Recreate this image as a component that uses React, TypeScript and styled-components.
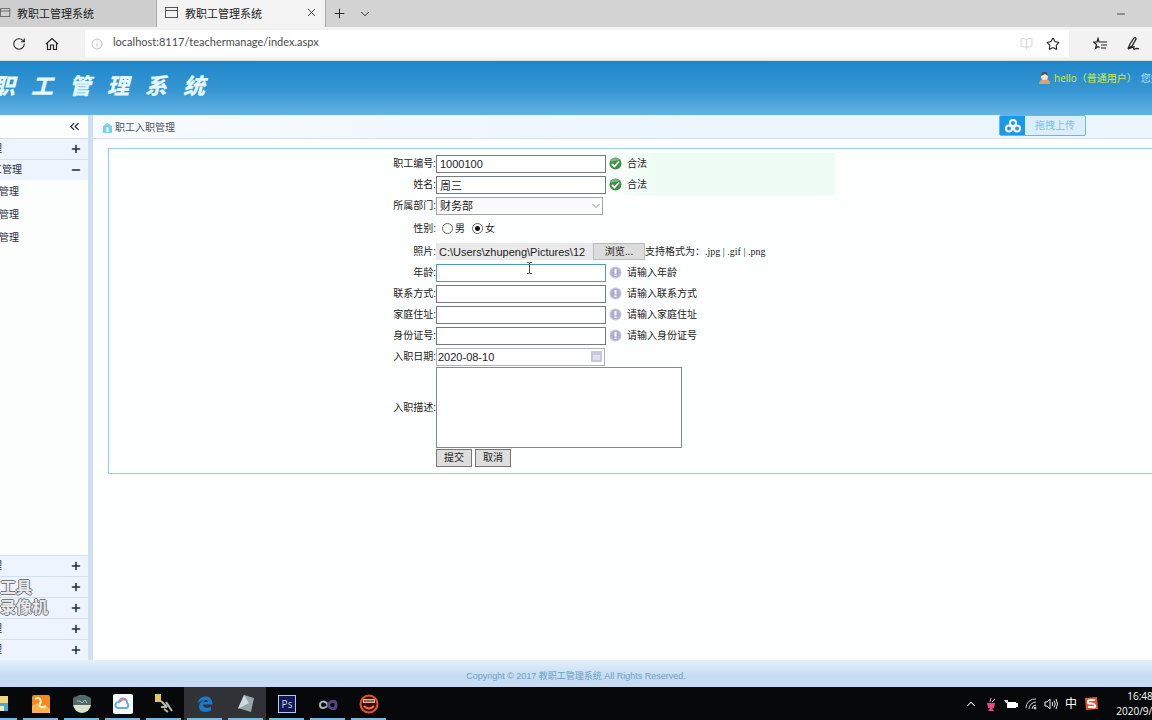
import React from 'react';
import styled, { createGlobalStyle, css } from 'styled-components';
import { BookOpen, ChevronDown, ChevronUp, ChevronsLeft, Info, Minus, Plus, RotateCw, Star, X } from 'lucide-react';

const GlobalStyle = createGlobalStyle`
  * { box-sizing: border-box; }
  body {
    margin: 0;
    font: 10px/14px "Liberation Sans", "Noto Sans CJK SC", sans-serif;
    color: #222;
    background: #fdfffe;
  }
  button, input, select, textarea { font: inherit; color: inherit; margin: 0; }
`;

const Screen = styled.div`
  display: flex;
  flex-direction: column;
  min-height: 100vh;
  overflow: hidden;
`;

const IconButton = styled.button`
  display: flex;
  align-items: center;
  justify-content: center;
  flex: none;
  width: 20px;
  height: 20px;
  padding: 0;
  border: 0;
  background: none;
`;

/* Browser chrome */

const TabStrip = styled.div`
  display: flex;
  height: 27px;
  background: #d3d3d3;
  font: 11px/16px "Noto Sans CJK SC", sans-serif;
  color: #1b1b1b;
`;

const Tab = styled.div<{ $active?: boolean; $width: number }>`
  display: flex;
  align-items: center;
  gap: 6px;
  width: ${(p) => p.$width}px;
  padding: 0 4px 2px ${(p) => (p.$active ? 8 : 0)}px;
  background: ${(p) => (p.$active ? '#f3f3f3' : '#cfcfcf')};
  border-right: 1px solid #a9a9a9;
  overflow: hidden;
  white-space: nowrap;
  & > svg { flex: none; }
`;

const TabLabel = styled.span`
  flex: 1;
`;

const StripActions = styled.div`
  display: flex;
  align-items: center;
  flex: 1;
  padding: 0 21px 0 3px;
  gap: 6px;
`;

const Spacer = styled.div`
  flex: 1;
`;

const AddressBar = styled.div`
  display: flex;
  align-items: center;
  height: 34px;
  padding-left: 9px;
  background: #f2f2f2;
  border-bottom: 1px solid #d9dfe5;
`;

const NavButtons = styled.div`
  display: flex;
  gap: 13px;
  width: 76px;
`;

const AddressField = styled.label`
  display: flex;
  align-items: center;
  flex: 1;
  gap: 10px;
  height: 27px;
  padding: 0 6px;
  background: #fff;
  color: #aaa;
`;

const AddressInput = styled.input`
  flex: 1;
  min-width: 0;
  padding: 0 0 3px;
  border: 0;
  outline: 0;
  background: none;
  color: #4b4b4b;
  font: 11px/16px Lato, sans-serif;
`;

const ToolButtons = styled.div`
  display: flex;
  gap: 13px;
  padding: 0 9px 0 21px;
`;

/* Application */

const Header = styled.header`
  display: flex;
  justify-content: space-between;
  height: 54px;
  background: linear-gradient(#1e87c9, #3796d3 55%, #62b3e2);
  overflow: hidden;
`;

const Title = styled.h1`
  display: flex;
  align-items: center;
  gap: 16px;
  margin: 0 0 2px -7px;
  color: #e4f8ff;
  font: italic 900 22px/30px "Liberation Serif", "Noto Sans CJK SC", serif;
`;

const UserInfo = styled.div`
  display: flex;
  gap: 4px;
  width: 113px;
  padding-top: 9px;
  color: #d8ec3a;
  font: 10px/16px "Open Sans", "Noto Sans CJK SC", sans-serif;
  white-space: nowrap;
  overflow: hidden;
  & > svg { flex: none; margin-top: 2px; }
`;

const Greeting = styled.span`
  color: #b5e2ff;
`;

const Body = styled.div`
  display: flex;
  flex: 1;
`;

const Sidebar = styled.nav`
  position: relative;
  display: flex;
  flex-direction: column;
  flex: none;
  width: 93px;
  border-right: 5px solid #cfdff0;
  background: #fcfefe;
`;

const SideRow = styled.button<{ $plain?: boolean }>`
  display: flex;
  align-items: center;
  justify-content: space-between;
  height: ${(p) => (p.$plain ? 23 : 21)}px;
  padding: 0 6px 0 0;
  border: 0;
  border-top: ${(p) => (p.$plain ? '0' : '1px solid #d3dfee')};
  background: ${(p) => (p.$plain ? 'none' : '#edf4fd')};
  color: #1d2a3c;
`;

const SideText = styled.span<{ $width: number }>`
  display: flex;
  justify-content: flex-end;
  width: ${(p) => p.$width}px;
  overflow: hidden;
  white-space: nowrap;
`;

const Watermark = styled.div`
  position: absolute;
  left: 0;
  bottom: 44px;
  color: #e6eaf0;
  font: bold 16px/20px "Noto Sans CJK SC", sans-serif;
  white-space: nowrap;
  text-shadow: 1px 0 #777, -1px 0 #777, 0 1px #777, 0 -1px #777;
`;

const Content = styled.main`
  flex: 1;
  min-width: 0;
`;

const Crumbs = styled.div`
  display: flex;
  justify-content: space-between;
  height: 24px;
  padding: 0 66px 0 10px;
  border-bottom: 1px solid #d5e1ea;
  background: linear-gradient(90deg, #f8fbfe, #eaf5fc 60%);
`;

const Crumb = styled.h2`
  display: flex;
  align-items: center;
  gap: 3px;
  margin: 2px 0 0;
  font-size: 10px;
  font-weight: normal;
  color: #4a5360;
`;

const UploadButton = styled.button`
  display: flex;
  align-items: center;
  width: 87px;
  height: 21px;
  padding: 0;
  border: 1px solid #69b7ee;
  border-radius: 2px;
  background: #d9effd;
  color: #7dbdea;
`;

const UploadIcon = styled.span`
  display: flex;
  align-items: center;
  justify-content: center;
  width: 25px;
  height: 19px;
  background: #1899ea;
`;

const UploadText = styled.span`
  flex: 1;
`;

const Panel = styled.form`
  margin: 9px 0 0 15px;
  padding: 4px 0 6px;
  border: 1px solid #93cfe0;
  border-right: 0;
`;

const Row = styled.div<{ $height?: number }>`
  display: flex;
  align-items: center;
  height: ${(p) => p.$height ?? 21}px;
`;

const labelStyle = css`
  flex: none;
  width: 327px;
  text-align: right;
  white-space: nowrap;
`;

const FieldLabel = styled.label`${labelStyle}`;
const GroupLabel = styled.span`${labelStyle}`;

const TextField = styled.input<{ $focus?: boolean }>`
  width: 170px;
  height: 18px;
  padding: 0 3px;
  border: 1px solid ${(p) => (p.$focus ? '#4b9cc4' : '#747a7e')};
  border-radius: 0;
  outline: 0;
  background: #fff;
  font-size: 11px;
`;

const DeptSelect = styled.span`
  position: relative;
  width: 167px;
  height: 18px;
  & > select {
    appearance: none;
    width: 100%;
    height: 18px;
    padding: 0 3px;
    border: 1px solid #a0a4a6;
    border-radius: 0;
    background: #fbfbfb;
    font-size: 11px;
  }
  & > svg { position: absolute; right: 1px; top: 3px; pointer-events: none; }
`;

const Choice = styled.label`
  display: flex;
  align-items: center;
  gap: 2px;
  padding: 0 1px 0 6px;
`;

const Radio = styled.input`
  appearance: none;
  width: 11px;
  height: 11px;
  border: 1px solid #666;
  border-radius: 50%;
  background: #fff;
  &:checked { background: radial-gradient(circle, #111 0 2px, #fff 3px); }
`;

const FilePath = styled.input`
  width: 157px;
  height: 17px;
  padding: 0 3px;
  border: 0;
  background: #e9e9e9;
  font-size: 11px;
`;

const BrowseButton = styled.button`
  width: 52px;
  height: 17px;
  padding: 0;
  border: 1px solid #bcbcbc;
  background: #dcdcdc;
`;

const Formats = styled.span`
  font-family: "Liberation Serif", "Noto Sans CJK SC", serif;
  white-space: pre;
`;

const Status = styled.span<{ $ok?: boolean }>`
  display: flex;
  align-items: center;
  gap: 5px;
  width: 229px;
  height: 21px;
  padding-left: 3px;
  background: ${(p) => (p.$ok ? 'linear-gradient(90deg, #fdfffe, #effcf4 20%)' : 'none')};
`;

const DateField = styled.span`
  display: flex;
  align-items: center;
  width: 169px;
  height: 18px;
  padding-right: 2px;
  border: 1px solid #b0b4b6;
  background: #fff;
  & > input {
    flex: 1;
    min-width: 0;
    padding: 0 1px;
    border: 0;
    background: none;
    font-size: 11px;
  }
`;

const Description = styled.textarea`
  display: block;
  width: 246px;
  height: 81px;
  border: 1px solid #85898b;
  border-radius: 0;
  background: #fff;
  resize: none;
`;

const Actions = styled.div`
  display: flex;
  gap: 3px;
  padding: 1px 0 0 327px;
`;

const ActionButton = styled.button`
  width: 36px;
  height: 18px;
  padding: 0;
  border: 1px solid #777;
  background: #dedede;
`;

const Cursor = styled.svg`
  position: absolute;
  left: 90px;
  top: -2px;
  pointer-events: none;
`;

const CursorAnchor = styled.span`
  position: relative;
  display: flex;
`;

const Footer = styled.footer`
  height: 27px;
  padding-top: 9px;
  background: linear-gradient(#e4effa, #c6dcf4 60%);
  color: #6ea0c4;
  font-size: 9px;
  text-align: center;
`;

/* Desktop taskbar */

const Taskbar = styled.div`
  display: flex;
  justify-content: space-between;
  height: 33px;
  background: #060809;
  color: #fff;
  overflow: hidden;
`;

const Apps = styled.div`
  display: flex;
  margin-left: -21px;
`;

const AppButton = styled.button<{ $active?: boolean }>`
  display: flex;
  align-items: center;
  justify-content: center;
  width: 41px;
  padding: 0;
  border: 0;
  border-left: 3px solid ${(p) => (p.$active ? '#303236' : 'transparent')};
  border-right: 3px solid ${(p) => (p.$active ? '#303236' : 'transparent')};
  background: ${(p) => (p.$active ? '#303236' : 'none')};
  background-clip: padding-box;
  box-shadow: inset 0 -2px #7fb6de;
`;

const Tray = styled.div`
  display: flex;
  align-items: center;
  font-size: 12px;
`;

const TrayItem = styled.span`
  display: flex;
  justify-content: center;
  width: 20px;
`;

const Clock = styled.div`
  display: flex;
  flex-direction: column;
  align-items: flex-start;
  width: 36px;
  margin-left: 15px;
  font: 10px/15px "Open Sans", sans-serif;
  white-space: nowrap;
  overflow: hidden;
`;

const ClockText = styled.time`
  flex: none;
  width: 48px;
  text-align: center;
`;

const PageIcon = () => (
  <svg width="14" height="12" viewBox="0 0 14 12" fill="none" stroke="#555">
    <rect x=".5" y=".5" width="12" height="10" />
    <path d="M.5 3.5h12" />
  </svg>
);

const OkIcon = () => (
  <svg width="13" height="13" viewBox="0 0 13 13">
    <circle cx="6.5" cy="6.5" r="6" fill="#3c8f45" />
    <path d="M1.5 5a5 5 0 0 1 9-2z" fill="#79b97e" />
    <path d="M3 7l2.500 2.500L10 4.500" fill="none" stroke="#fff" strokeWidth="1.800" />
  </svg>
);

const HintIcon = () => (
  <svg width="13" height="13" viewBox="0 0 13 13">
    <circle cx="6.500" cy="6.500" r="6" fill="#c3c1dc" />
    <circle cx="6.500" cy="6.500" r="4.500" fill="#aeacce" />
    <path d="M6.500 3v4.500M6.500 8.500v1.500" stroke="#fff" strokeWidth="2" />
  </svg>
);

const appIcons: { name: string; active?: boolean; art: React.ReactNode }[] = [
  { name: '资源管理器', art: <><path d="M1 2h17v15H1z" fill="#f4d778" /><path d="M1 9h17v8H1z" fill="#48a8dd" /><path d="M6 12h8v5H6z" fill="#f6e7ad" /></> },
  { name: '图片工具', art: <><rect x="1" y="1" width="18" height="18" rx="2" fill="#f28a1c" /><path d="M1 12l6-3 3 4 5-1 4 3v4H1z" fill="#f9b54b" /><path d="M4 5c5-3 7 2 5 5s2 4 6 2" fill="none" stroke="#fff0d0" strokeWidth="2" /></> },
  { name: '虚拟机', art: <><circle cx="10" cy="10" r="9" fill="#dbe3cd" /><path d="M1 4q9-6 18 0v7H1z" fill="#52686b" /><path d="M5 7h3l2 2 3-3 2 3" fill="none" stroke="#aebfbd" /></> },
  { name: '百度网盘', art: <><rect x="0" y="0" width="20" height="20" rx="2" fill="#f6f8fa" /><path d="M5 14a3 3 0 0 1 1-6 4 4 0 0 1 8 1 3 3 0 0 1 0 5z" fill="none" stroke="#66aee1" strokeWidth="2" /><path d="M7 8a4 4 0 0 1 6-2" stroke="#e27a90" strokeWidth="2" fill="none" /></> },
  { name: '数据库工具', art: <><path d="M1 0h6v8H1z" fill="#dfc66c" /><path d="M7 7l6 6m-6 0h6m-1-5l6 9m-8-2l4 3" stroke="#b8b8b0" strokeWidth="2" /></> },
  { name: 'Edge', active: true, art: <path d="M2.500 9C4 3 9 2 12 2.500c4 1 5.500 4 5.500 8H8c0 4 5 4 8 2v4c-5 2.500-12 2-12-4 0-3 2-5 5-6-2 0-4 1-6.500 2.500zM8.500 8H13c0-3-4-2.500-4.500 0z" fill="#1879cf" /> },
  { name: '记事本', active: true, art: <><path d="M8 1l10 3-3 14-13-4z" fill="#93a7ab" /><path d="M8 1l5 8-11 6z" fill="#ccd8d9" /></> },
  { name: 'Photoshop', art: <><rect x="1.500" y="1.500" width="17" height="17" fill="#14194f" stroke="#b8c4f3" /><text x="10" y="14" textAnchor="middle" fontSize="10" fontFamily="Open Sans" fill="#c6d2ff">Ps</text></> },
  { name: 'Visual Studio', art: <><path d="M10 11c-3-5-8-4-8 0s5 4 8 0" fill="none" stroke="#a9b5c0" strokeWidth="2" /><path d="M10 11c3-5 8-5 8 0s-5 5-8 0" fill="none" stroke="#51457e" strokeWidth="3" /></> },
  { name: '录像机', art: <><circle cx="10" cy="10" r="8.500" fill="#301009" stroke="#e6532a" strokeWidth="2" /><path d="M4 5h12v4H4z" fill="#f0b48e" /><path d="M5 7h10" stroke="#301009" /><path d="M5 12q5 5 10 0" stroke="#ef7040" strokeWidth="2" fill="none" /></> },
];

const hintRows = [
  { id: 'age', label: '年龄:', hint: '请输入年龄', focus: true },
  { id: 'phone', label: '联系方式:', hint: '请输入联系方式' },
  { id: 'address', label: '家庭住址:', hint: '请输入家庭住址' },
  { id: 'idcard', label: '身份证号:', hint: '请输入身份证号' },
];

/* The watermark covers the names of the second and third groups. */
const sideGroups = [
  { name: '部门管理', text: true },
  { name: '考勤管理', text: false },
  { name: '工资管理', text: false },
  { name: '奖惩管理', text: true },
  { name: '用户管理', text: true },
];

export default function App() {
  return (
    <Screen>
      <GlobalStyle />
      <TabStrip>
        <Tab $width={157}>
          <SideText $width={11}><PageIcon /></SideText>
          <TabLabel>教职工管理系统</TabLabel>
        </Tab>
        <Tab $active $width={169}>
          <PageIcon />
          <TabLabel>教职工管理系统</TabLabel>
          <IconButton aria-label="关闭标签页"><X size={13} strokeWidth={1.5} /></IconButton>
        </Tab>
        <StripActions>
          <IconButton aria-label="新建标签页"><Plus size={15} strokeWidth={1.5} /></IconButton>
          <IconButton aria-label="标签页列表"><ChevronDown size={14} strokeWidth={1.5} /></IconButton>
          <Spacer />
          <IconButton aria-label="最小化"><Minus size={12} strokeWidth={1.5} /></IconButton>
        </StripActions>
      </TabStrip>
      <AddressBar>
        <NavButtons>
          <IconButton aria-label="刷新"><RotateCw size={14} strokeWidth={1.8} /></IconButton>
          <IconButton aria-label="主页">
            <svg width="14" height="14" viewBox="0 0 14 14" fill="none" stroke="#222" strokeWidth="1.200">
              <path d="M1 7l6-5.500L13 7M2.500 6v6.500h3V8h3v4.500h3V6" />
            </svg>
          </IconButton>
        </NavButtons>
        <AddressField>
          <Info size={12} strokeWidth={1.5} />
          <AddressInput aria-label="地址" defaultValue="localhost:8117/teachermanage/index.aspx" />
          <BookOpen size={13} color="#ccc" strokeWidth={1.5} />
          <IconButton aria-label="收藏此页"><Star size={14} color="#222" strokeWidth={1.8} /></IconButton>
        </AddressField>
        <ToolButtons>
          <IconButton aria-label="收藏夹">
            <svg width="14" height="14" viewBox="0 0 14 14" fill="none" stroke="#222" strokeWidth="1.200">
              <path d="M9 5L6 5 5 1.500 4 5H.500l3 2.500-1 4L5 9.500l1.500 1M8 5h6M8 8h6M8 11h5" />
            </svg>
          </IconButton>
          <IconButton aria-label="添加笔记">
            <svg width="14" height="14" viewBox="0 0 14 14" fill="none" stroke="#222" strokeWidth="1.300">
              <path d="M2 12l2-5 4-6q2-1 2 1L6 9l-4 3q4-2 6-2-1 3 1 2 2-1 4 0" />
            </svg>
          </IconButton>
        </ToolButtons>
      </AddressBar>

      <Header>
        <Title>{[...'职工管理系统'].map((c) => <span key={c}>{c}</span>)}</Title>
        <UserInfo>
          <svg width="11" height="12" viewBox="0 0 11 12">
            <path d="M0 12q0-5 5.500-5T11 12z" fill="#e0a070" />
            <circle cx="5.500" cy="4.500" r="3.500" fill="#f5e2cf" />
            <path d="M2 4q0-4 3.500-4T9 4L6 2z" fill="#4a4a55" />
          </svg>
          <span>hello（普通用户）</span>
          <Greeting>您好</Greeting>
        </UserInfo>
      </Header>

      <Body>
        <Sidebar>
          <SideRow $plain>
            <span />
            <ChevronsLeft size={15} aria-label="收起菜单" />
          </SideRow>
          <SideRow>
            <SideText $width={2}>系统管理</SideText>
            <Plus size={12} strokeWidth={3} />
          </SideRow>
          <SideRow>
            <SideText $width={22}>职工管理</SideText>
            <Minus size={12} strokeWidth={3} />
          </SideRow>
          <SideRow $plain><SideText $width={19}>管理</SideText></SideRow>
          <SideRow $plain><SideText $width={19}>管理</SideText></SideRow>
          <SideRow $plain><SideText $width={19}>管理</SideText></SideRow>
          <Spacer />
          {sideGroups.map((g) => (
            <SideRow key={g.name} aria-label={g.name}>
              <SideText $width={2}>{g.text && g.name}</SideText>
              <Plus size={12} strokeWidth={3} />
            </SideRow>
          ))}
          <Watermark>工具<br />录像机</Watermark>
        </Sidebar>

        <Content>
          <Crumbs>
            <Crumb>
              <svg width="9" height="10" viewBox="0 0 9 10">
                <path d="M0 3l4.500-3L9 3v7H0z" fill="#7fd0e6" />
                <path d="M3.500 4h2v5h-2z" fill="#fff" />
              </svg>
              职工入职管理
            </Crumb>
            <UploadButton type="button">
              <UploadIcon>
                <svg width="18" height="16" viewBox="0 0 18 16" fill="none" stroke="#fff" strokeWidth="2">
                  <circle cx="9" cy="5" r="3" /><circle cx="5" cy="10.500" r="3" /><circle cx="13" cy="10.500" r="3" />
                </svg>
              </UploadIcon>
              <UploadText>拖拽上传</UploadText>
            </UploadButton>
          </Crumbs>

          <Panel onSubmit={(e) => e.preventDefault()}>
            <Row>
              <FieldLabel htmlFor="number">职工编号:</FieldLabel>
              <TextField id="number" defaultValue="1000100" />
              <Status $ok><OkIcon />合法</Status>
            </Row>
            <Row>
              <FieldLabel htmlFor="name">姓名:</FieldLabel>
              <TextField id="name" defaultValue="周三" />
              <Status $ok><OkIcon />合法</Status>
            </Row>
            <Row>
              <FieldLabel htmlFor="dept">所属部门:</FieldLabel>
              <DeptSelect>
                <select id="dept" defaultValue="财务部"><option>财务部</option></select>
                <ChevronDown size={12} color="#555" strokeWidth={1.5} />
              </DeptSelect>
            </Row>
            <Row $height={25} role="radiogroup" aria-labelledby="gender">
              <GroupLabel id="gender">性别:</GroupLabel>
              <Choice><Radio type="radio" name="gender" />男</Choice>
              <Choice><Radio type="radio" name="gender" defaultChecked />女</Choice>
            </Row>
            <Row>
              <FieldLabel htmlFor="photo">照片:</FieldLabel>
              <FilePath id="photo" readOnly value="C:\Users\zhupeng\Pictures\12" />
              <BrowseButton type="button">浏览...</BrowseButton>
              <Formats>支持格式为：.jpg | .gif | .png</Formats>
            </Row>
            {hintRows.map((r) => (
              <Row key={r.id}>
                <FieldLabel htmlFor={r.id}>{r.label}</FieldLabel>
                <CursorAnchor>
                  <TextField id={r.id} $focus={r.focus} />
                  {r.focus && (
                    <Cursor width="7" height="12" viewBox="0 0 7 12" fill="none" stroke="#555">
                      <path d="M1 .500h2l.500 1 .500-1h2M3.500 1v10M1 11.500h2l.500-1 .500 1h2" />
                    </Cursor>
                  )}
                </CursorAnchor>
                <Status><HintIcon />{r.hint}</Status>
              </Row>
            ))}
            <Row>
              <FieldLabel htmlFor="date">入职日期:</FieldLabel>
              <DateField>
                <input id="date" defaultValue="2020-08-10" />
                <svg width="11" height="11" viewBox="0 0 11 11">
                  <rect width="11" height="11" rx="1" fill="#c5c9dc" />
                  <path d="M2 4h7v5H2z" fill="#dfe2ee" />
                </svg>
              </DateField>
            </Row>
            <Row $height={81}>
              <FieldLabel htmlFor="desc">入职描述:</FieldLabel>
              <Description id="desc" />
            </Row>
            <Actions>
              <ActionButton type="submit">提交</ActionButton>
              <ActionButton type="button">取消</ActionButton>
            </Actions>
          </Panel>
        </Content>
      </Body>

      <Footer>Copyright © 2017 教职工管理系统 All Rights Reserved.</Footer>

      <Taskbar>
        <Apps>
          {appIcons.map((a) => (
            <AppButton key={a.name} aria-label={a.name} $active={a.active}>
              <svg width="20" height="20" viewBox="0 0 20 20">{a.art}</svg>
            </AppButton>
          ))}
        </Apps>
        <Tray>
          <TrayItem><ChevronUp size={14} strokeWidth={1.8} /></TrayItem>
          <TrayItem>
            <svg width="10" height="14" viewBox="0 0 10 14">
              <path d="M1 6h8l-1 5H6l2 3H2l2-3H2z" fill="#e5487f" /><path d="M4 5l1-4M6 5l3-3" stroke="#f5b9cd" />
            </svg>
          </TrayItem>
          <TrayItem>
            <svg width="14" height="10" viewBox="0 0 14 10">
              <path d="M3 3h9v1h2v4h-2v1H3z" fill="#fff" /><path d="M0 1h4v3H2z" fill="#ddd" />
            </svg>
          </TrayItem>
          <TrayItem>
            <svg width="12" height="12" viewBox="0 0 12 12" fill="none" stroke="#ccc">
              <path d="M1 10A9 9 0 0 1 11 1M4 11a7 7 0 0 1 7-7M7 11a4 4 0 0 1 4-4" /><circle cx="10" cy="10" r="1" fill="#fff" />
            </svg>
          </TrayItem>
          <TrayItem>
            <svg width="14" height="12" viewBox="0 0 14 12" fill="none" stroke="#eee">
              <path d="M1 4h2l3-3v10L3 8H1zM8 4q1.500 2 0 4M10 2.500q2.500 3.500 0 7M12 1q3 5 0 10" />
            </svg>
          </TrayItem>
          <TrayItem>中</TrayItem>
          <TrayItem>
            <svg width="13" height="13" viewBox="0 0 13 13">
              <path d="M0 1l12-1 1 12-12 1z" fill="#e8552f" />
              <path d="M10 3H5Q3 3 3 5t3 1.500 4 2T7 10H3" fill="none" stroke="#fff" strokeWidth="2" />
            </svg>
          </TrayItem>
          <Clock>
            <ClockText>16:48</ClockText>
            <ClockText>2020/9/10</ClockText>
          </Clock>
        </Tray>
      </Taskbar>
    </Screen>
  );
}
